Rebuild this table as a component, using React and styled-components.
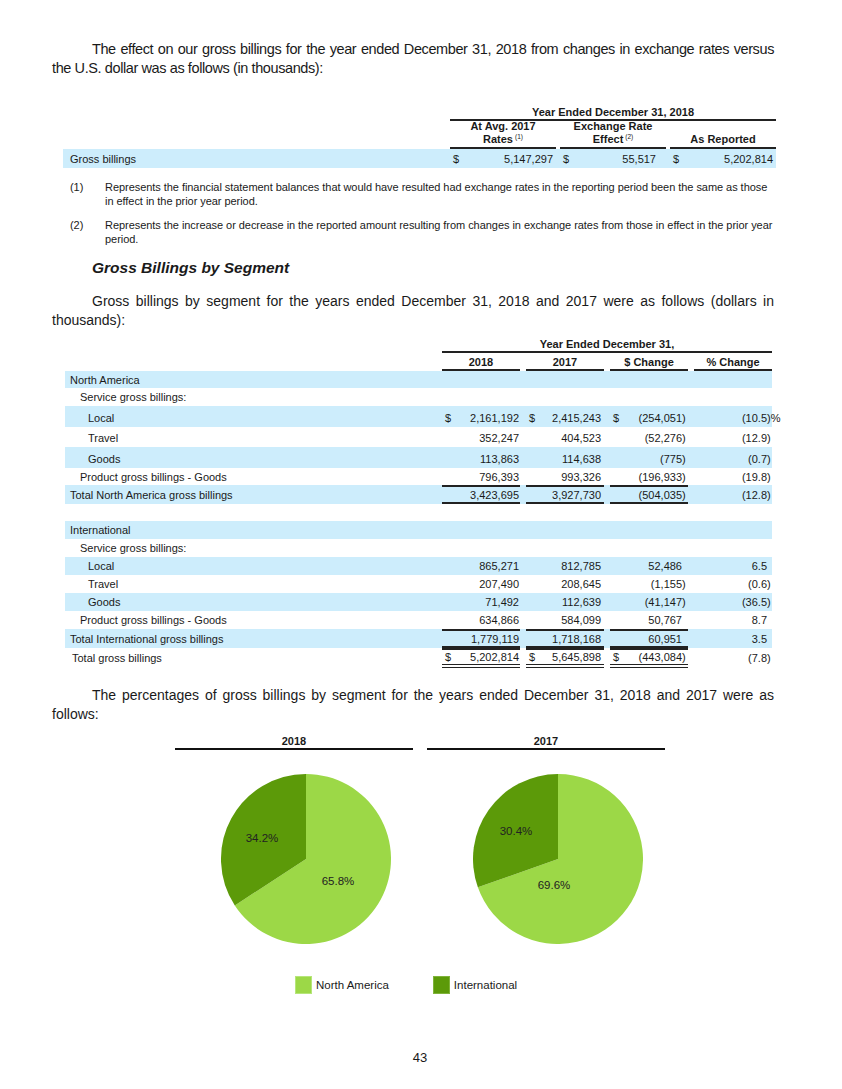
import React from "react";
import styled, { createGlobalStyle } from "styled-components";

const Global = createGlobalStyle`
  html, body { margin: 0; padding: 0; background: #fff; }
  body { font-family: "Liberation Sans", Arial, sans-serif; color: #1a1a1a; }
`;

const Page = styled.div`
  width: 842px;
  box-sizing: border-box;
  padding: 40px 68px 20px 52px;
`;

const Para = styled.p`
  margin: ${p => p.mt || 0}px 0 0;
  font-family: "Liberation Sans", Arial, sans-serif;
  font-size: ${p => p.size || 14}px;
  letter-spacing: ${p => p.ls || 0}px;
  line-height: 19px;
  text-align: justify;
  text-indent: 40px;
`;

const Heading = styled.h3`
  margin: 13px 0 0 40px;
  font-size: 15.5px;
  line-height: 18px;
  font-weight: bold;
  font-style: italic;
`;

/* ---------- tables ---------- */
const Table = styled.div`
  margin: ${p => p.mt || 0}px 0 0 ${p => p.ml || 0}px;
  width: ${p => p.w}px;
  font-size: 11px;
`;

const Row = styled.div`
  display: grid;
  grid-template-columns: 1fr repeat(${p => p.cols}, ${p => p.colw}px);
  column-gap: ${p => p.gap}px;
  height: ${p => p.h || 18}px;
  box-sizing: border-box;
  padding-top: ${p => p.pt || 0}px;
  margin-bottom: ${p => p.mb || 0}px;
  background: ${p => (p.shade ? "#cdedfc" : "transparent")};
`;

const Label = styled.div`
  display: flex;
  align-items: center;
  padding-left: ${p => p.indent || 5}px;
  white-space: nowrap;
`;

const Span = styled.div`
  grid-column: 2 / span ${p => p.span};
  display: flex;
  align-items: flex-end;
  justify-content: center;
  font-weight: bold;
  border-bottom: 2px solid #222;
  padding-bottom: 1px;
`;

const Head = styled.div`
  display: flex;
  flex-direction: column;
  align-items: center;
  justify-content: flex-end;
  text-align: center;
  font-weight: bold;
  line-height: 10.5px;
  border-bottom: 2px solid #222;
  padding-bottom: ${p => p.pb || 2}px;
`;

const Sup = styled.sup`
  font-size: 6.5px;
  font-weight: normal;
  vertical-align: 4px;
  margin-left: 2px;
`;

const Cell = styled.div`
  display: flex;
  align-items: center;
  justify-content: space-between;
  padding: 0 ${p => p.pr || 2}px 0 3px;
  white-space: nowrap;
  border-top: ${p => (p.top ? "2px solid #222" : "0")};
  border-bottom: ${p =>
    p.dbl ? "4px double #222" : p.bottom ? "2px solid #222" : "0"};
`;

const Num = styled.span`
  margin-left: auto;
  margin-right: ${p => (p.neg ? "-3.7px" : "0")};
`;

const Pct = styled.span`
  margin-right: -9.8px;
`;

function Amount({ v, dollar, pct, ...rest }) {
  const neg = typeof v === "string" && v.startsWith("(");
  return (
    <Cell {...rest}>
      {dollar ? <span>$</span> : null}
      {v ? (
        <Num neg={neg}>
          {v}
          {pct ? <Pct>%</Pct> : null}
        </Num>
      ) : null}
    </Cell>
  );
}

/* ---------- footnotes ---------- */
const Notes = styled.div`
  margin-top: 12px;
  display: flex;
  flex-direction: column;
  gap: 10px;
  font-size: 11px;
  letter-spacing: -0.05px;
  line-height: 14px;
`;

const Note = styled.div`
  display: grid;
  grid-template-columns: 35px 1fr;
  padding-left: 18px;
`;

/* ---------- charts ---------- */
const Charts = styled.div`
  margin: 10px 0 0 123px;
  display: grid;
  grid-template-columns: 238px 238px;
  column-gap: 14px;
`;

const ChartCol = styled.div`
  display: flex;
  flex-direction: column;
  align-items: center;
`;

const ChartTitle = styled.div`
  width: 100%;
  text-align: center;
  font-size: 11px;
  font-weight: bold;
  line-height: 14px;
  border-bottom: 2px solid #111;
`;

const PieBox = styled.svg`
  margin: 24px 0 0 24px;
  display: block;
`;

const Legend = styled.div`
  margin: 32px 0 0 243px;
  display: flex;
  gap: 44px;
  font-size: 11.5px;
`;

const LegendItem = styled.div`
  display: flex;
  align-items: center;
  gap: 4px;
`;

const Swatch = styled.span`
  width: 17px;
  height: 18px;
  box-sizing: border-box;
  background: ${p => p.c};
  border: 1px solid ${p => p.b};
`;

const PageNum = styled.div`
  margin-top: 56px;
  text-align: center;
  font-size: 13px;
  line-height: 16px;
  padding-left: 14px;
`;

const LIGHT = "#9cd847";
const DARK = "#5c9a09";

function Pie({ na, naLabel, intLabel, naPos, intPos }) {
  const r = 85;
  const c = 85;
  const a = (na / 100) * 2 * Math.PI;
  const x = c + r * Math.sin(a);
  const y = c - r * Math.cos(a);
  const large = na > 50 ? 1 : 0;
  const naPath = `M${c},${c} L${c},${c - r} A${r},${r} 0 ${large} 1 ${x},${y} Z`;
  const intPath = `M${c},${c} L${x},${y} A${r},${r} 0 ${1 - large} 1 ${c},${c - r} Z`;
  return (
    <PieBox width="170" height="170" viewBox="0 0 170 170">
      <path d={naPath} fill={LIGHT} />
      <path d={intPath} fill={DARK} />
      <text x={intPos[0]} y={intPos[1]} fontSize="11.5" fill="#222" fontFamily="Liberation Sans, sans-serif" textAnchor="middle" dominantBaseline="middle">{intLabel}</text>
      <text x={naPos[0]} y={naPos[1]} fontSize="11.5" fill="#222" fontFamily="Liberation Sans, sans-serif" textAnchor="middle" dominantBaseline="middle">{naLabel}</text>
    </PieBox>
  );
}

const seg = [
  { t: "North America", shade: true, h: 17 },
  { t: "Service gross billings:", lvl: 1, h: 18 },
  { t: "Local", lvl: 2, shade: true, h: 21, pt: 2, d: true, v: ["2,161,192", "2,415,243", "(254,051)", "(10.5)"], pct: true },
  { t: "Travel", lvl: 2, h: 20, pt: 1, v: ["352,247", "404,523", "(52,276)", "(12.9)"] },
  { t: "Goods", lvl: 2, shade: true, h: 21, pt: 2, v: ["113,863", "114,638", "(775)", "(0.7)"] },
  { t: "Product gross billings - Goods", lvl: 1, h: 17, v: ["796,393", "993,326", "(196,933)", "(19.8)"] },
  { t: "Total North America gross billings", shade: true, h: 19, total: true, v: ["3,423,695", "3,927,730", "(504,035)", "(12.8)"] },
  { t: "", h: 17 },
  { t: "International", shade: true, h: 18 },
  { t: "Service gross billings:", lvl: 1, h: 18 },
  { t: "Local", lvl: 2, shade: true, h: 18, v: ["865,271", "812,785", "52,486", "6.5"] },
  { t: "Travel", lvl: 2, h: 18, v: ["207,490", "208,645", "(1,155)", "(0.6)"] },
  { t: "Goods", lvl: 2, shade: true, h: 18, v: ["71,492", "112,639", "(41,147)", "(36.5)"] },
  { t: "Product gross billings - Goods", lvl: 1, h: 18, v: ["634,866", "584,099", "50,767", "8.7"] },
  { t: "Total International gross billings", shade: true, h: 19, total: true, v: ["1,779,119", "1,718,168", "60,951", "3.5"] },
  { t: "Total gross billings", h: 20, grand: true, d: true, v: ["5,202,814", "5,645,898", "(443,084)", "(7.8)"], ind: 7 },
];

const indents = [5, 15, 23];

export default function App() {
  return (
    <Page>
      <Global />
      <Para size={14.5} ls={-0.4}>
        The effect on our gross billings for the year ended December 31, 2018 from changes in exchange rates versus
        the U.S. dollar was as follows (in thousands):
      </Para>

      <Table mt={24} ml={11} w={713}>
        <Row cols={3} colw={106} gap={4} h={19}>
          <Label />
          <Span span={3}>Year Ended December 31, 2018</Span>
        </Row>
        <Row cols={3} colw={106} gap={4} h={26} mb={2}>
          <Label />
          <Head pb={3}>
            <span>At Avg. 2017</span>
            <span>Rates<Sup>(1)</Sup></span>
          </Head>
          <Head pb={3}>
            <span>Exchange Rate</span>
            <span>Effect<Sup>(2)</Sup></span>
          </Head>
          <Head pb={3}>
            <span>As Reported</span>
          </Head>
        </Row>
        <Row cols={3} colw={106} gap={4} h={19} pt={1} shade>
          <Label indent={7}>Gross billings</Label>
          <Amount dollar v="5,147,297" pr={3} />
          <Amount dollar v="55,517" pr={10} />
          <Amount dollar v="5,202,814" pr={3} />
        </Row>
      </Table>

      <Notes>
        <Note>
          <span>(1)</span>
          <span>
            Represents the financial statement balances that would have resulted had exchange rates in the reporting period been the same as those
            in effect in the prior year period.
          </span>
        </Note>
        <Note>
          <span>(2)</span>
          <span>
            Represents the increase or decrease in the reported amount resulting from changes in exchange rates from those in effect in the prior year
            period.
          </span>
        </Note>
      </Notes>

      <Heading>Gross Billings by Segment</Heading>

      <Para mt={15}>
        Gross billings by segment for the years ended December 31, 2018 and 2017 were as follows (dollars in
        thousands):
      </Para>

      <Table mt={5} ml={13} w={707}>
        <Row cols={4} colw={78} gap={6} h={18}>
          <Label />
          <Span span={4}>Year Ended December 31,</Span>
        </Row>
        <Row cols={4} colw={78} gap={6} h={18}>
          <Label />
          <Head pb={2}>2018</Head>
          <Head pb={2}>2017</Head>
          <Head pb={2}>$ Change</Head>
          <Head pb={2}>% Change</Head>
        </Row>
        {seg.map((r, i) => (
          <Row key={i} cols={4} colw={78} gap={6} h={r.h} pt={r.pt} shade={r.shade}>
            <Label indent={r.ind || indents[r.lvl || 0]}>{r.t}</Label>
            {r.v ? (
              <>
                <Amount v={r.v[0]} dollar={r.d} pr={1} top={r.total || r.grand} bottom={r.total} dbl={r.grand} />
                <Amount v={r.v[1]} dollar={r.d} pr={3} top={r.total || r.grand} bottom={r.total} dbl={r.grand} />
                <Amount v={r.v[2]} dollar={r.d} pr={6} top={r.total || r.grand} bottom={r.total} dbl={r.grand} />
                <Amount v={r.v[3]} pct={r.pct} pr={5} />
              </>
            ) : null}
          </Row>
        ))}
      </Table>

      <Para mt={18}>
        The percentages of gross billings by segment for the years ended December 31, 2018 and 2017 were as
        follows:
      </Para>

      <Charts>
        <ChartCol>
          <ChartTitle>2018</ChartTitle>
          <Pie na={65.8} naLabel="65.8%" intLabel="34.2%" naPos={[117, 108]} intPos={[41, 65]} />
        </ChartCol>
        <ChartCol>
          <ChartTitle>2017</ChartTitle>
          <Pie na={69.6} naLabel="69.6%" intLabel="30.4%" naPos={[81, 112]} intPos={[43, 58]} />
        </ChartCol>
      </Charts>

      <Legend>
        <LegendItem>
          <Swatch c={LIGHT} b="#b6e67a" />
          <span>North America</span>
        </LegendItem>
        <LegendItem>
          <Swatch c={DARK} b="#7fb33a" />
          <span>International</span>
        </LegendItem>
      </Legend>

      <PageNum>43</PageNum>
    </Page>
  );
}
